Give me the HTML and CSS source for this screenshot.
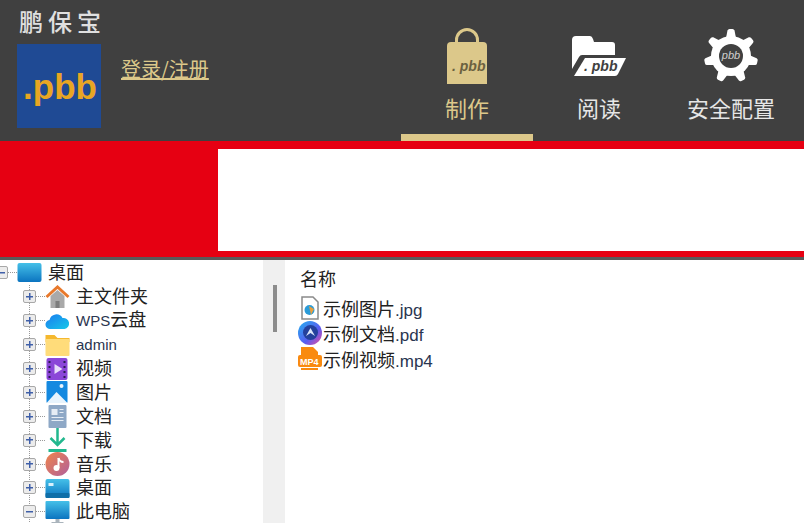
FILE: index.html
```html
<!DOCTYPE html>
<html>
<head lang="zh-CN">
  <meta charset="UTF-8">
  <title>鹏保宝</title>
  <link rel="stylesheet" href="styles.css">
</head>
<body>
<svg class="defs" width="0" height="0">
  <defs>
    <linearGradient id="desk" x1="0" y1="0" x2="0" y2="1"><stop offset="0" stop-color="#45c0e8"/><stop offset="1" stop-color="#0b74c0"/></linearGradient>
    <linearGradient id="music" x1="0" y1="0" x2="1" y2="1"><stop offset="0" stop-color="#f0844a"/><stop offset="1" stop-color="#b0609c"/></linearGradient>
    <linearGradient id="ring" x1="0" y1="0" x2="1" y2="1"><stop offset="0" stop-color="#22b0f0"/><stop offset=".6" stop-color="#5a5cf0"/><stop offset="1" stop-color="#f04c9a"/></linearGradient>
    <linearGradient id="cloud" x1="0" y1="0" x2="1" y2="1"><stop offset="0" stop-color="#1a7cf0"/><stop offset="1" stop-color="#18c8e8"/></linearGradient>
  </defs>
</svg>
<div class="header">
  <div class="brand">
    <div class="brand-name">鹏保宝</div>
    <div class="brand-row">
      <div class="logo">.pbb</div>
      <a class="login" href="#">登录/注册</a>
    </div>
  </div>
  <div class="tabs">
    <div class="tab current">
      <svg class="tab-icon" width="60" height="62" viewBox="0 0 60 62">
        <path d="M19.500 17v-4a10.500 10.500 0 0 1 21 0v4" fill="none" stroke="#dcc88a" stroke-width="3"/>
        <path d="M14 15h32q4 0 4 4v38h-40v-38q0-4 4-4z" fill="#dcc88a"/>
        <text x="15" y="44" class="pbb-text" fill="#6b6140">. pbb</text>
      </svg>
      <span>制作</span>
    </div>
    <div class="tab">
      <svg class="tab-icon" width="60" height="62" viewBox="0 0 60 62">
        <path d="M3 13q0-4 4-4h14q2 0 3 3l1 3h18q3 0 3 3v10h-33q-2 0-3 2l-7 12z" fill="#fff"/>
        <path d="M16 31h41l-8 16q-1 2-3 2h-41z" fill="#fff"/>
        <text x="15" y="44" class="pbb-text" fill="#404040">. pbb</text>
      </svg>
      <span>阅读</span>
    </div>
    <div class="tab">
      <svg class="tab-icon" width="60" height="62" viewBox="0 0 60 62">
        <g fill="#fff">
          <circle cx="30" cy="29" r="20"/>
          <path d="M25 11l1.500-7.500q.5-1.500 2-1.500h3q1.500 0 2 1.500l1.500 7.500z"/>
          <path d="M25 11l1.500-7.500q.5-1.500 2-1.500h3q1.500 0 2 1.500l1.500 7.500z" transform="rotate(51.400 30 29)"/>
          <path d="M25 11l1.500-7.500q.5-1.500 2-1.500h3q1.500 0 2 1.500l1.500 7.500z" transform="rotate(102.900 30 29)"/>
          <path d="M25 11l1.500-7.500q.5-1.500 2-1.500h3q1.500 0 2 1.500l1.500 7.500z" transform="rotate(154.300 30 29)"/>
          <path d="M25 11l1.500-7.500q.5-1.500 2-1.500h3q1.500 0 2 1.500l1.500 7.500z" transform="rotate(205.700 30 29)"/>
          <path d="M25 11l1.500-7.500q.5-1.500 2-1.500h3q1.500 0 2 1.500l1.500 7.500z" transform="rotate(257.100 30 29)"/>
          <path d="M25 11l1.500-7.500q.5-1.500 2-1.500h3q1.500 0 2 1.500l1.500 7.500z" transform="rotate(308.600 30 29)"/>
        </g>
        <circle cx="30" cy="29" r="12" fill="#404040"/>
        <text x="30" y="32" class="pbb-gear" fill="#d0d0d0">pbb</text>
      </svg>
      <span>安全配置</span>
    </div>
  </div>
</div>

<div class="banner">
  <div class="banner-side"></div>
  <div class="banner-main"></div>
</div>

<div class="panes">
  <div class="tree">
    <div class="row root">
      <i class="toggle minus"></i><i class="dots"></i>
      <svg class="ico" viewBox="0 0 24 24"><rect x="0" y="2" width="24" height="19" rx="2" fill="url(#desk)"/></svg>
      <span class="label">桌面</span>
    </div>
    <div class="children">
      <div class="row">
        <i class="toggle"></i><i class="dots"></i>
        <svg class="ico" viewBox="0 0 24 24"><path d="M5 11v12h14v-12l-7-6z" fill="#a9a9a9"/><rect x="10" y="16" width="4" height="7" fill="#7d7d7d"/><path d="M1 12l11-10 11 10" fill="none" stroke="#e8792c" stroke-width="3"/></svg>
        <span class="label">主文件夹</span>
      </div>
      <div class="row">
        <i class="toggle"></i><i class="dots"></i>
        <svg class="ico" viewBox="0 0 24 24"><path d="M5 20a4.500 4.500 0 0 1-1-9 7 7 0 0 1 13-2 5.500 5.500 0 0 1 2 11z" fill="url(#cloud)"/></svg>
        <span class="label"><em class="latin">WPS</em>云盘</span>
      </div>
      <div class="row">
        <i class="toggle"></i><i class="dots"></i>
        <svg class="ico" viewBox="0 0 24 24"><path d="M0 2h9l3 3h12v4h-24z" fill="#f5b82e"/><rect y="6" width="24" height="17" rx="1" fill="#ffdc7a"/></svg>
        <span class="label"><em class="latin">admin</em></span>
      </div>
      <div class="row">
        <i class="toggle"></i><i class="dots"></i>
        <svg class="ico" viewBox="0 0 24 24"><rect x="1" y="1" width="21" height="22" rx="2" fill="#8b46d8"/><path d="M9 7l8 5-8 5z" fill="#e8dcfa"/><path d="M3 4h2v2h-2zM3 9h2v2h-2zM3 14h2v2h-2zM3 19h2v2h-2zM18 4h2v2h-2zM18 9h2v2h-2zM18 14h2v2h-2zM18 19h2v2h-2z" fill="#2b1a55"/></svg>
        <span class="label">视频</span>
      </div>
      <div class="row">
        <i class="toggle"></i><i class="dots"></i>
        <svg class="ico" viewBox="0 0 24 24"><rect x="1" y="1" width="21" height="22" rx="1" fill="#1489e0"/><path d="M1 23l10-11 11 11z" fill="#e8f4fd"/><circle cx="16" cy="6" r="2" fill="#e8f4fd"/></svg>
        <span class="label">图片</span>
      </div>
      <div class="row">
        <i class="toggle"></i><i class="dots"></i>
        <svg class="ico" viewBox="0 0 24 24"><rect x="3" y="1" width="18" height="23" rx="1" fill="#8ea8c6"/><path d="M6 5h6v6h-6zM14 5h4v1h-4zM14 8h4v1h-4zM6 13h12v1h-12zM6 16h12v1h-12z" fill="#e6edf5"/></svg>
        <span class="label">文档</span>
      </div>
      <div class="row">
        <i class="toggle"></i><i class="dots"></i>
        <svg class="ico" viewBox="0 0 24 24"><path d="M12 0v16M5 10l7 7 7-7" fill="none" stroke="#22b88e" stroke-width="2.500"/><rect x="3" y="21" width="18" height="3" fill="#22b88e"/></svg>
        <span class="label">下载</span>
      </div>
      <div class="row">
        <i class="toggle"></i><i class="dots"></i>
        <svg class="ico" viewBox="0 0 24 24"><circle cx="12" cy="12" r="12" fill="url(#music)"/><path d="M13 6v10" stroke="#fff" stroke-width="2"/><path d="M13 6q1 4 5 4" fill="none" stroke="#fff" stroke-width="2"/><circle cx="11" cy="16" r="3" fill="#fff"/></svg>
        <span class="label">音乐</span>
      </div>
      <div class="row">
        <i class="toggle"></i><i class="dots"></i>
        <svg class="ico" viewBox="0 0 24 24"><rect y="3" width="24" height="19" rx="2" fill="url(#desk)"/><rect y="17" width="24" height="5" rx="1" fill="#0f6fa8"/><rect x="3" y="7" width="5" height="3" fill="#d9f1fc"/></svg>
        <span class="label">桌面</span>
      </div>
      <div class="row">
        <i class="toggle minus"></i><i class="dots"></i>
        <svg class="ico" viewBox="0 0 24 24"><rect y="1" width="24" height="18" rx="1" fill="url(#desk)"/><rect x="10" y="19" width="4" height="3" fill="#aab4bc"/><rect x="6" y="22" width="12" height="2" fill="#aab4bc"/></svg>
        <span class="label">此电脑</span>
      </div>
    </div>
  </div>
  <div class="gutter"><div class="thumb"></div></div>
  <div class="files">
    <div class="files-head">名称</div>
    <div class="file">
      <svg class="file-ico" viewBox="0 0 24 24"><path d="M4 1h11l5 5v17h-16z" fill="#fff" stroke="#8a8a8a" stroke-width="1.500"/><circle cx="11.500" cy="14" r="5" fill="#2a9bd8"/><path d="M11 10l5 3-3 6z" fill="#e8a040"/></svg>
      <span>示例图片<em>.jpg</em></span>
    </div>
    <div class="file">
      <svg class="file-ico" viewBox="0 0 24 24"><circle cx="12" cy="12" r="12" fill="url(#ring)"/><circle cx="12.500" cy="11.500" r="7.500" fill="#24409c"/><path d="M8 15l4.500-8 4.500 8-4.500-3z" fill="#dbe6fa"/></svg>
      <span>示例文档<em>.pdf</em></span>
    </div>
    <div class="file">
      <svg class="file-ico" viewBox="0 0 24 24"><path d="M3 0h12l5 5v4h-17z" fill="#f98a10"/><rect x="0" y="8" width="24" height="12" rx="2" fill="#f98a10"/><path d="M3 21h17v2h-17z" fill="#f98a10"/><text x="2" y="17.500" class="mp4-text" fill="#fff">MP4</text></svg>
      <span>示例视频<em>.mp4</em></span>
    </div>
  </div>
</div>
</body>
</html>
```

FILE: styles.css
```css
* {
  margin: 0;
  padding: 0;
  box-sizing: border-box;
}

html, body {
  height: 100%;
  overflow: hidden;
}

body {
  background-color: #fff;
  font-family: "Noto Sans CJK SC", "Liberation Sans", sans-serif;
  color: #222;
}

.defs {
  display: block;
}

.header {
  height: 141px;
  background-color: #404040;
  display: flex;
  padding-left: 17px;
}

.brand {
  width: 384px;
  padding-top: 4px;
}

.brand-name {
  padding-left: 2px;
  height: 40px;
  line-height: 34px;
  font-size: 24px;
  font-weight: 500;
  letter-spacing: 5px;
  color: #e0e0e0;
}

.brand-row {
  display: flex;
  align-items: flex-start;
  gap: 20px;
}

.logo {
  width: 84px;
  height: 84px;
  padding-left: 2px;
  background-color: #1f4a94;
  color: #e8a623;
  font-family: "Liberation Sans", sans-serif;
  font-weight: bold;
  font-size: 35px;
  line-height: 86px;
  text-align: center;
}

.login {
  margin-top: 10px;
  font-size: 20px;
  line-height: 30px;
  color: #dcc88a;
}

.tabs {
  display: flex;
}

.tab {
  width: 132px;
  height: 141px;
  padding-top: 27px;
  border-bottom: 7px solid transparent;
  display: flex;
  flex-direction: column;
  align-items: center;
  font-size: 22px;
  line-height: 32px;
  color: #e6e6e6;
}

.tab.current {
  color: #dcc88a;
  border-bottom-color: #dcc88a;
}

.tab-icon {
  display: block;
  margin-bottom: 2px;
}

.pbb-text {
  font-family: "Liberation Sans", sans-serif;
  font-style: italic;
  font-weight: bold;
  font-size: 14px;
}

.pbb-gear {
  font-family: "Liberation Sans", sans-serif;
  font-style: italic;
  font-size: 11px;
  text-anchor: middle;
}

.mp4-text {
  font-family: "Liberation Sans", sans-serif;
  font-weight: bold;
  font-size: 9px;
}

.banner {
  height: 116px;
  background-color: #e60012;
  display: flex;
  padding: 8px 0 6px;
}

.banner-side {
  width: 218px;
}

.banner-main {
  flex: 1;
  background-color: #fff;
}

.panes {
  display: flex;
  height: 266px;
  border-top: 3px solid #5a5a5a;
}

.tree {
  width: 268px;
  margin-left: -5px;
  padding-top: 1px;
  flex-shrink: 0;
}

.children {
  margin-left: 34px;
  border-left: 1px dotted #999;
}

.row {
  height: 23.900px;
  display: flex;
  align-items: center;
  font-size: 18px;
}

.children .row {
  margin-left: -7px;
}

.toggle {
  width: 13px;
  height: 13px;
  border: 1px solid #a8a8a8;
  border-radius: 2px;
  background:
    linear-gradient(#3f5fa8, #3f5fa8) center / 7px 1.500px no-repeat,
    linear-gradient(#3f5fa8, #3f5fa8) center / 1.500px 7px no-repeat,
    #ececec;
  flex-shrink: 0;
}

.toggle.minus {
  background:
    linear-gradient(#3f5fa8, #3f5fa8) center / 7px 1.500px no-repeat,
    #ececec;
}

.dots {
  width: 9px;
  border-top: 1px dotted #999;
  flex-shrink: 0;
}

.ico {
  width: 25px;
  height: 24px;
  flex-shrink: 0;
}

.label {
  margin-left: 6px;
  padding-bottom: 3px;
  line-height: 20px;
  white-space: nowrap;
}

.latin {
  font-family: "Liberation Sans", sans-serif;
  font-style: normal;
  font-size: 15px;
  color: #2a3550;
}

.gutter {
  width: 22px;
  background-color: #f0f0f0;
  flex-shrink: 0;
  padding: 25px 0 0 10px;
}

.thumb {
  width: 4px;
  height: 47px;
  background-color: #8c8c8c;
}

.files {
  flex: 1;
  padding: 6px 0 0 13px;
}

.files-head {
  padding-left: 2px;
  height: 29px;
  font-size: 18px;
  line-height: 24px;
}

.file {
  height: 25.500px;
  display: flex;
  align-items: center;
  gap: 1px;
  font-size: 18px;
}

.file-ico {
  width: 24px;
  height: 24px;
  flex-shrink: 0;
}

.file em {
  font-family: "Liberation Sans", sans-serif;
  font-style: normal;
  font-size: 17px;
  color: #2a3550;
}
```
